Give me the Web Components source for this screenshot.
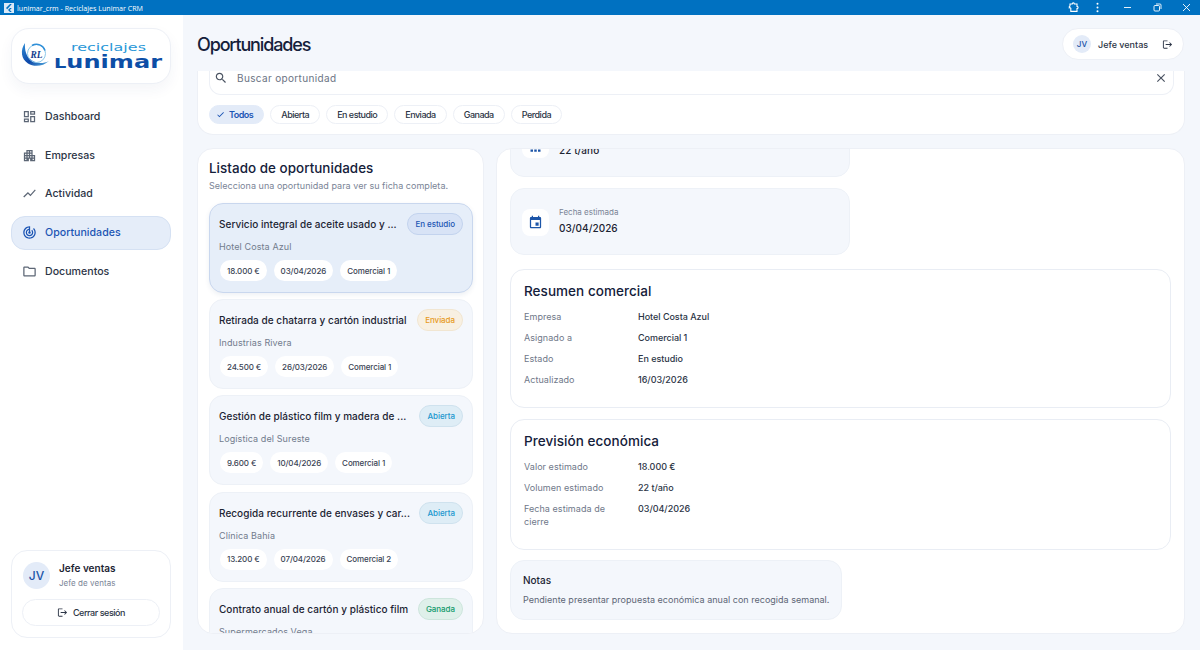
<!DOCTYPE html>
<html lang="es">
<head>
<meta charset="utf-8">
<title>lunimar_crm - Reciclajes Lunimar CRM</title>
<style>
  html, body { margin: 0; height: 100%; overflow: hidden; background: #f4f7fc; }
  body { font-family: Inter, "Noto Sans", sans-serif; color: #1c2433; }
</style>
</head>
<body>
<crm-app></crm-app>

<script>
const ICONS = {
    dashboard: "M19 5v2h-4V5h4M9 5v6H5V5h4m10 8v6h-4v-6h4M9 17v2H5v-2h4M21 3h-8v6h8V3zM11 3H3v10h8V3zm10 8h-8v10h8V11zm-10 4H3v6h8v-6z",
    apartment: "M17 11V3H7v4H3v14h8v-4h2v4h8V11h-4zM7 19H5v-2h2v2zm0-4H5v-2h2v2zm0-4H5V9h2v2zm4 4H9v-2h2v2zm0-4H9V9h2v2zm0-4H9V5h2v2zm4 8h-2v-2h2v2zm0-4h-2V9h2v2zm0-4h-2V5h2v2zm4 12h-2v-2h2v2zm0-4h-2v-2h2v2z",
    chart: "M3.5 18.49l6-6.01 4 4L22 6.92l-1.41-1.41-7.09 7.97-4-4L2 16.99z",
    track: "M19.07 4.93l-1.41 1.41C19.1 7.79 20 9.79 20 12c0 4.42-3.58 8-8 8s-8-3.58-8-8c0-4.08 3.05-7.44 7-7.93v2.02C8.16 6.57 6 9.03 6 12c0 3.31 2.69 6 6 6s6-2.69 6-6c0-1.66-.67-3.16-1.76-4.24l-1.41 1.41C15.55 9.9 16 10.9 16 12c0 2.21-1.79 4-4 4s-4-1.79-4-4c0-1.86 1.28-3.41 3-3.86v2.14c-.6.35-1 .98-1 1.72 0 1.1.9 2 2 2s2-.9 2-2c0-.74-.4-1.38-1-1.72V2h-1C6.48 2 2 6.48 2 12s4.48 10 10 10 10-4.48 10-10c0-2.76-1.12-5.26-2.93-7.07z",
    folder: "M9.17 6l2 2H20v10H4V6h5.17M10 4H4c-1.1 0-1.99.9-1.99 2L2 18c0 1.1.9 2 2 2h16c1.1 0 2-.9 2-2V8c0-1.1-.9-2-2-2h-8l-2-2z",
    logout: "M17 7l-1.41 1.41L18.17 11H8v2h10.17l-2.58 2.58L17 17l5-5zM4 5h8V3H4c-1.1 0-2 .9-2 2v14c0 1.1.9 2 2 2h8v-2H4V5z",
    search: "M15.5 14h-.79l-.28-.27C15.41 12.59 16 11.11 16 9.5 16 5.91 13.09 3 9.5 3S3 5.91 3 9.5 5.91 16 9.5 16c1.61 0 3.09-.59 4.23-1.57l.27.28v.79l5 4.99L20.49 19l-4.99-5zm-6 0C7.01 14 5 11.99 5 9.5S7.01 5 9.5 5 14 7.01 14 9.5 11.99 14 9.5 14z",
    close: "M19 6.41L17.59 5 12 10.59 6.41 5 5 6.41 10.59 12 5 17.59 6.41 19 12 13.41 17.59 19 19 17.59 13.41 12z",
    check: "M9 16.17L4.83 12l-1.42 1.41L9 19 21 7l-1.41-1.41z",
    event: "M17 12h-5v5h5v-5zM16 1v2H8V1H6v2H5c-1.11 0-1.99.9-1.99 2L3 19c0 1.1.89 2 2 2h14c1.1 0 2-.9 2-2V5c0-1.1-.9-2-2-2h-1V1h-2zm3 18H5V8h14v11z",
    scale: "M4 2h16v2H4zM4 20h4v3.500H4zm6 0h4v3.500h-4zm6 0h4v3.500h-4z"
};

// small helper so every element below only has to give its css and markup
class ShadowEl extends HTMLElement {
    constructor() {
        super();
        this.attachShadow({mode: 'open'});
    }
    connectedCallback() {
        this.shadowRoot.innerHTML = `<style>${this.css()}</style>${this.html()}`;
    }
    attr(name, fallback = "") {
        return this.getAttribute(name) ?? fallback;
    }
    css() { return ":host{display:block}"; }
    html() { return "<slot></slot>"; }
}

class UiIcon extends ShadowEl {
    css() {
        return `:host{display:inline-flex;flex:none;width:var(--size,16px);height:var(--size,16px);color:inherit}
                svg{width:100%;height:100%;fill:currentColor;display:block}`;
    }
    html() {
        return `<svg viewBox="0 0 24 24"><path d="${ICONS[this.attr("name")]}"/></svg>`;
    }
}

class TitleBar extends ShadowEl {
    css() {
        return `:host{display:flex;align-items:center;height:15px;background:#0071c1;color:#fff;
                  font:400 7.100px "Open Sans",sans-serif;padding-left:4px;box-sizing:border-box}
                .app{width:10px;height:10px;background:#dbe9f6;display:flex;margin-right:3px}
                .app svg{width:10px;height:10px}
                .name{flex:1;white-space:nowrap}
                .ctl{display:flex;align-items:center;height:15px}
                .ctl>*{display:flex;justify-content:center;align-items:center;flex:none}
                svg{display:block}`;
    }
    html() {
        return `<span class="app"><svg viewBox="0 0 10 10"><path d="M6 1 2 5l1.2 1.2L7.8 1zM6 5 4 7l2 2h1.8l-2-2L7.8 5z" fill="#0071c1"/></svg></span>
        <span class="name">lunimar_crm - Reciclajes Lunimar CRM</span>
        <span class="ctl">
          <span style="width:30px;margin-right:-1px"><svg width="11" height="11" viewBox="0 0 11 11" fill="none" stroke="#fff" stroke-width="1.1"><path d="M2 2h2.2a1.1 1.1 0 0 1 2.2 0H9v2.4a1.1 1.1 0 0 1 0 2.2V9.400H2.800V7.200a1.100 1.100 0 0 0-1.500-1.400V4.700A1.100 1.100 0 0 0 2 3.500z"/></svg></span>
          <span style="width:20px"><svg width="3" height="11" viewBox="0 0 3 11" fill="#fff"><circle cx="1.500" cy="1.800" r="1"/><circle cx="1.500" cy="5.500" r="1"/><circle cx="1.500" cy="9.200" r="1"/></svg></span>
          <span style="width:30px;margin-left:5px"><svg width="9" height="9" viewBox="0 0 9 9"><path d="M1 4.500h7" stroke="#fff" stroke-width=".9"/></svg></span>
          <span style="width:30px"><svg width="9" height="9" viewBox="0 0 9 9" fill="none" stroke="#fff" stroke-width=".9"><rect x="1" y="2.500" width="5.500" height="5.500" rx="1"/><path d="M3 1h4a1 1 0 0 1 1 1v4"/></svg></span>
          <span style="width:28px"><svg width="9" height="9" viewBox="0 0 9 9"><path d="M1 1l7 7M8 1 1 8" stroke="#fff" stroke-width=".9"/></svg></span>
        </span>`;
    }
}

class BrandLogo extends ShadowEl {
    css() {
        return `:host{display:block;height:56px;box-sizing:border-box;background:#fff;border:1px solid #edf0f6;border-radius:18px;
                  box-shadow:0 6px 14px rgba(30,60,120,.05);overflow:hidden}
                svg{display:block;width:100%;height:100%}`;
    }
    html() {
        return `<svg viewBox="0 0 158 54">
          <defs><linearGradient id="sw" x1="0" y1="0" x2="1" y2="1"><stop offset="0" stop-color="#2f8fd8"/><stop offset=".55" stop-color="#0d47a8"/><stop offset="1" stop-color="#5db8e6"/></linearGradient></defs>
          <path d="M13 14C8 21 9 30 16 34.500c6 3.800 15 3 21-2.500-6 3-13 2.800-18-1.200C14 27 12.500 21 13 14z" fill="url(#sw)"/>
          <circle cx="24.500" cy="24.500" r="9" fill="none" stroke="#8cc9ea" stroke-width="1"/>
          <path d="M20 16.500a9 9 0 0 1 13 5" fill="none" stroke="#2f8fd8" stroke-width="1.500"/>
          <text x="18.500" y="28.500" font-family="Liberation Serif, serif" font-style="italic" font-weight="700" font-size="11" fill="#123a8c" textLength="12" lengthAdjust="spacingAndGlyphs">RL</text>
          <text x="59" y="22" font-family="DejaVu Sans, sans-serif" font-size="10" fill="#2a98d8" textLength="75" lengthAdjust="spacingAndGlyphs">reciclajes</text>
          <text x="42" y="38.500" font-family="DejaVu Sans, sans-serif" font-weight="700" font-size="18" fill="#0d4ea6" textLength="108" lengthAdjust="spacingAndGlyphs"><tspan font-size="14.500">L</tspan>unimar</text>
        </svg>`;
    }
}

class NavItem extends ShadowEl {
    css() {
        return `:host{display:flex;align-items:center;height:34px;box-sizing:border-box;padding-left:10px;gap:8px;
                  border:1px solid transparent;border-radius:14px;font-size:10.600px;font-weight:500;color:#2c3546;
                  letter-spacing:.02px;--size:15px}
                :host([active]){background:#e5edf9;border-color:#d5e1f3;color:#1c55b4;font-weight:500}
                ui-icon{color:#5c6675}
                :host([active]) ui-icon{color:#1c55b4}`;
    }
    html() {
        return `<ui-icon name="${this.attr("icon")}"></ui-icon><slot></slot>`;
    }
}

class UserAvatar extends ShadowEl {
    css() {
        return `:host{display:inline-flex;flex:none;align-items:center;justify-content:center;border-radius:50%;
                  background:#e3ebf8;color:#1c55a8;width:var(--avatar,27px);height:var(--avatar,27px);
                  font-size:var(--avatar-font,12px);font-weight:500}`;
    }
}

class UserCard extends ShadowEl {
    css() {
        return `:host{display:block;box-sizing:border-box;height:88px;padding:10px;border:1px solid #edf0f6;border-radius:16px;background:#fff}
                .who{display:flex;align-items:center;gap:9px;height:29px;margin-left:1px;--avatar:27px;--avatar-font:12px}
                .n{font-size:10px;font-weight:600;color:#1c2433;line-height:13px;letter-spacing:.02px}
                .r{font-size:8px;color:#7a8496;line-height:11px;margin-top:3px;letter-spacing:.05px}
                button{all:unset;box-sizing:border-box;display:flex;width:100%;height:27px;margin-top:9px;align-items:center;justify-content:center;
                  gap:5px;border:1px solid #edf0f6;border-radius:14px;font-size:9px;font-weight:500;color:#2c3546;letter-spacing:-.45px;--size:11px}`;
    }
    html() {
        return `<div class="who"><user-avatar>JV</user-avatar><div><div class="n">Jefe ventas</div><div class="r">Jefe de ventas</div></div></div>
        <button><ui-icon name="logout"></ui-icon>Cerrar sesión</button>`;
    }
}

class SideBar extends ShadowEl {
    css() {
        return `:host{display:flex;flex-direction:column;flex:none;width:183px;box-sizing:border-box;padding:13px 12px 12px 11px;background:#fff}
                nav{display:flex;flex-direction:column;gap:4.750px;margin-top:15.300px}
                .fill{flex:1}`;
    }
    html() {
        return `<brand-logo></brand-logo>
        <nav>
          <nav-item icon="dashboard">Dashboard</nav-item>
          <nav-item icon="apartment">Empresas</nav-item>
          <nav-item icon="chart">Actividad</nav-item>
          <nav-item icon="track" active>Oportunidades</nav-item>
          <nav-item icon="folder">Documentos</nav-item>
        </nav>
        <div class="fill"></div>
        <user-card></user-card>`;
    }
}

class PageHeader extends ShadowEl {
    css() {
        return `:host{display:flex;align-items:center;justify-content:space-between;height:32px;flex:none}
                h1{margin:0;font-size:18px;font-weight:500;color:#14203a;letter-spacing:-1.15px}
                .pill{display:flex;align-items:center;height:32px;width:122px;box-sizing:border-box;padding:0 10px;background:#fff;border:1px solid #edf0f6;
                  border-radius:16px;gap:7px;font-size:9px;font-weight:500;color:#2c3546;--avatar:18px;--avatar-font:8px;--size:11px;margin-right:1px}
                .pill span{flex:1;white-space:nowrap}`;
    }
    html() {
        return `<h1>${this.attr("title")}</h1>
        <div class="pill"><user-avatar>JV</user-avatar><span>Jefe ventas</span><ui-icon name="logout"></ui-icon></div>`;
    }
}

class FilterChip extends ShadowEl {
    css() {
        return `:host{display:inline-flex;align-items:center;height:19px;box-sizing:border-box;padding:0 10px;border:1px solid #edf0f6;border-radius:10px;
                  background:#fff;font-size:9px;font-weight:500;color:#2c3546;letter-spacing:-.5px;--size:9px;gap:4px}
                :host([selected]){background:#e3ebf8;border-color:#e3ebf8;color:#1c55b4;font-weight:600;padding:0 10px 0 6px}`;
    }
    html() {
        return `${this.hasAttribute("selected") ? '<ui-icon name="check"></ui-icon>' : ''}<slot></slot>`;
    }
}

class FilterBar extends ShadowEl {
    css() {
        return `:host{display:block;flex:none;height:64px;margin-top:11px;background:#fff;border:1px solid #edf0f6;border-top:0;
                  border-radius:0 0 16px 16px;box-sizing:border-box;padding:0 10px 0 11px;overflow:hidden}
                .search{display:flex;align-items:center;box-sizing:border-box;height:24px;padding:0 5px 10px 4px;border:1px solid #edf0f6;border-top:0;border-radius:0 0 12px 12px;
                  font-size:10px;color:#6b7484;letter-spacing:.35px;gap:9px;--size:14px}
                .search span{flex:1}
                .search ui-icon{color:#4a5362}
                .chips{display:flex;gap:6px;margin-top:10px}`;
    }
    html() {
        return `<div class="search"><ui-icon name="search"></ui-icon><span>Buscar oportunidad</span><ui-icon name="close"></ui-icon></div>
        <div class="chips">
          <filter-chip selected>Todos</filter-chip>
          <filter-chip>Abierta</filter-chip>
          <filter-chip>En estudio</filter-chip>
          <filter-chip>Enviada</filter-chip>
          <filter-chip>Ganada</filter-chip>
          <filter-chip>Perdida</filter-chip>
        </div>`;
    }
}

class StatusBadge extends ShadowEl {
    css() {
        const tones = {
            estudio: ["#d8e3f6", "#c3d3ee", "#1c55b4"],
            enviada: ["#f8f0e2", "#f1e6d2", "#e79a1e"],
            abierta: ["#deedf6", "#cfe2ee", "#1b97cf"],
            ganada: ["#dff0ea", "#cde5dc", "#129a6c"]
        };
        const t = tones[this.attr("tone")] || tones.abierta;
        return `:host{display:inline-flex;flex:none;align-items:center;height:22px;box-sizing:border-box;padding:0 7px;border-radius:11px;
                  background:${t[0]};border:1px solid ${t[1]};color:${t[2]};font-size:8px;font-weight:500;white-space:nowrap;letter-spacing:-.05px}`;
    }
}

class MetaPill extends ShadowEl {
    css() {
        return `:host{display:inline-flex;align-items:center;height:21px;box-sizing:border-box;padding:0 7px;border-radius:11px;background:#fff;
                  font-size:8px;font-weight:500;color:#3a4354;white-space:nowrap;letter-spacing:-.1px}`;
    }
}

class OppCard extends ShadowEl {
    css() {
        return `:host{display:block;flex:none;box-sizing:border-box;height:90px;padding:9px 9px 0;border:1px solid #edf1f7;border-radius:14px;background:#f4f7fc}
                :host([selected]){background:#e6eef9;border-color:#c9d7ee;box-shadow:0 2px 5px rgba(30,60,120,.08)}
                .top{display:flex;align-items:center;justify-content:space-between;gap:8px;height:22px}
                .t{font-size:10px;font-weight:500;color:#1c2433;white-space:nowrap;letter-spacing:.04px}
                .c{font-size:9px;color:#727c8d;margin-top:6px;line-height:12px;letter-spacing:.1px}
                .m{display:flex;gap:7px;margin-top:7px;margin-left:1px}`;
    }
    html() {
        const meta = this.attr("meta").split("|").filter(Boolean).map(m => `<meta-pill>${m}</meta-pill>`).join("");
        return `<div class="top"><span class="t">${this.attr("title")}</span><status-badge tone="${this.attr("tone")}">${this.attr("status")}</status-badge></div>
        <div class="c">${this.attr("company")}</div>
        <div class="m">${meta}</div>`;
    }
}

class OppList extends ShadowEl {
    css() {
        return `:host{display:block;box-sizing:border-box;min-height:0;background:#fff;border:1px solid #edf0f6;border-radius:16px;padding:11px 10px 0 11px;overflow:hidden}
                h2{margin:0;font-size:13.400px;font-weight:500;line-height:17px;color:#14203a;letter-spacing:.05px}
                p{margin:3px 0 0;font-size:9px;line-height:12px;color:#7a8496;letter-spacing:.03px}
                .cards{display:flex;flex-direction:column;gap:6.200px;margin-top:11px}`;
    }
    html() {
        return `<h2>Listado de oportunidades</h2>
        <p>Selecciona una oportunidad para ver su ficha completa.</p>
        <div class="cards"><slot></slot></div>`;
    }
}

class InfoTile extends ShadowEl {
    css() {
        return `:host{display:flex;align-items:center;box-sizing:border-box;width:340px;height:67px;padding:0 11px;gap:10px;background:#f4f7fc;border:1px solid #edf1f7;border-radius:14px;--size:15px}
                .ic{width:27px;height:27px;display:flex;align-items:center;justify-content:center;background:#fff;border-radius:8px;color:#1c55a8;margin-top:1px}
                .tx{margin-top:-1px}
                .l{font-size:8px;color:#7a8496;line-height:11px}
                .v{font-size:10px;font-weight:500;color:#1c2433;line-height:14px;margin-top:3px;letter-spacing:.05px}`;
    }
    html() {
        return `<div class="ic"><ui-icon name="${this.attr("icon")}"></ui-icon></div>
        <div class="tx"><div class="l">${this.attr("label")}</div><div class="v">${this.attr("value")}</div></div>`;
    }
}

class KvRow extends ShadowEl {
    css() {
        return `:host{display:grid;grid-template-columns:114px 1fr;font-size:9px;line-height:13px;letter-spacing:.05px}
                .k{color:#6f7889;padding-right:14px}
                .v{color:#2c3546;font-weight:500;letter-spacing:-.03px}`;
    }
    html() {
        return `<div class="k">${this.attr("k")}</div><div class="v">${this.attr("v")}</div>`;
    }
}

class DetailSection extends ShadowEl {
    css() {
        return `:host{display:block;box-sizing:border-box;padding:12px 13px 0;background:#fff;border:1px solid #e9edf4;border-radius:14px;height:var(--h,139px)}
                h3{margin:0;font-size:13.500px;font-weight:500;line-height:18px;color:#14203a;letter-spacing:.05px}
                .rows{display:flex;flex-direction:column;gap:8.300px;margin-top:9.500px}`;
    }
    html() {
        return `<h3>${this.attr("title")}</h3><div class="rows"><slot></slot></div>`;
    }
}

class NotesCard extends ShadowEl {
    css() {
        return `:host{display:block;box-sizing:border-box;width:332px;height:60px;padding:13px 12px 0;background:#f4f7fc;border:1px solid #edf1f7;border-radius:14px}
                .t{font-size:10px;font-weight:500;line-height:13px;color:#1c2433}
                .b{font-size:9px;line-height:12px;color:#5d6676;margin-top:7px;white-space:nowrap;letter-spacing:.02px}`;
    }
    html() {
        return `<div class="t">${this.attr("title")}</div><div class="b"><slot></slot></div>`;
    }
}

class DetailPanel extends ShadowEl {
    css() {
        return `:host{display:block;box-sizing:border-box;min-height:0;background:#fff;border:1px solid #edf0f6;border-radius:16px;overflow:hidden}
                .scroll{display:flex;flex-direction:column;padding:0 13px;margin-top:-39px}
                .a{margin-top:11px}
                .b{margin-top:14px}
                .c{margin-top:11px}
                .d{margin-top:10px}`;
    }
    html() {
        return `<div class="scroll">
          <info-tile icon="scale" label="Volumen estimado" value="22 t/año"></info-tile>
          <info-tile class="a" icon="event" label="Fecha estimada" value="03/04/2026"></info-tile>
          <detail-section class="b" title="Resumen comercial" style="--h:139px">
            <kv-row k="Empresa" v="Hotel Costa Azul"></kv-row>
            <kv-row k="Asignado a" v="Comercial 1"></kv-row>
            <kv-row k="Estado" v="En estudio"></kv-row>
            <kv-row k="Actualizado" v="16/03/2026"></kv-row>
          </detail-section>
          <detail-section class="c" title="Previsión económica" style="--h:131px">
            <kv-row k="Valor estimado" v="18.000 €"></kv-row>
            <kv-row k="Volumen estimado" v="22 t/año"></kv-row>
            <kv-row k="Fecha estimada de cierre" v="03/04/2026"></kv-row>
          </detail-section>
          <notes-card class="d" title="Notas">Pendiente presentar propuesta económica anual con recogida semanal.</notes-card>
        </div>`;
    }
}

class CrmApp extends ShadowEl {
    css() {
        return `:host{display:flex;flex-direction:column;width:1200px;height:650px;overflow:hidden}
                .shell{flex:1;display:flex;min-height:0}
                main{flex:1;min-width:0;display:flex;flex-direction:column;padding:13px 15px 16px 14px;background:#f4f7fc;box-sizing:border-box}
                .cols{flex:1;min-height:0;display:grid;grid-template-columns:287px 1fr;gap:12px;margin-top:13px}`;
    }
    html() {
        return `<title-bar></title-bar>
        <div class="shell">
          <side-bar></side-bar>
          <main>
            <page-header title="Oportunidades"></page-header>
            <filter-bar></filter-bar>
            <div class="cols">
              <opp-list>
                <opp-card selected title="Servicio integral de aceite usado y ..." status="En estudio" tone="estudio" company="Hotel Costa Azul" meta="18.000 €|03/04/2026|Comercial 1"></opp-card>
                <opp-card title="Retirada de chatarra y cartón industrial" status="Enviada" tone="enviada" company="Industrias Rivera" meta="24.500 €|26/03/2026|Comercial 1"></opp-card>
                <opp-card title="Gestión de plástico film y madera de ..." status="Abierta" tone="abierta" company="Logística del Sureste" meta="9.600 €|10/04/2026|Comercial 1"></opp-card>
                <opp-card title="Recogida recurrente de envases y car..." status="Abierta" tone="abierta" company="Clínica Bahía" meta="13.200 €|07/04/2026|Comercial 2"></opp-card>
                <opp-card title="Contrato anual de cartón y plástico film" status="Ganada" tone="ganada" company="Supermercados Vega" meta=""></opp-card>
              </opp-list>
              <detail-panel></detail-panel>
            </div>
          </main>
        </div>`;
    }
}

customElements.define("ui-icon", UiIcon);
customElements.define("title-bar", TitleBar);
customElements.define("brand-logo", BrandLogo);
customElements.define("nav-item", NavItem);
customElements.define("user-avatar", UserAvatar);
customElements.define("user-card", UserCard);
customElements.define("side-bar", SideBar);
customElements.define("page-header", PageHeader);
customElements.define("filter-chip", FilterChip);
customElements.define("filter-bar", FilterBar);
customElements.define("status-badge", StatusBadge);
customElements.define("meta-pill", MetaPill);
customElements.define("opp-card", OppCard);
customElements.define("opp-list", OppList);
customElements.define("info-tile", InfoTile);
customElements.define("kv-row", KvRow);
customElements.define("detail-section", DetailSection);
customElements.define("notes-card", NotesCard);
customElements.define("detail-panel", DetailPanel);
customElements.define("crm-app", CrmApp);
</script>
</body>
</html>
